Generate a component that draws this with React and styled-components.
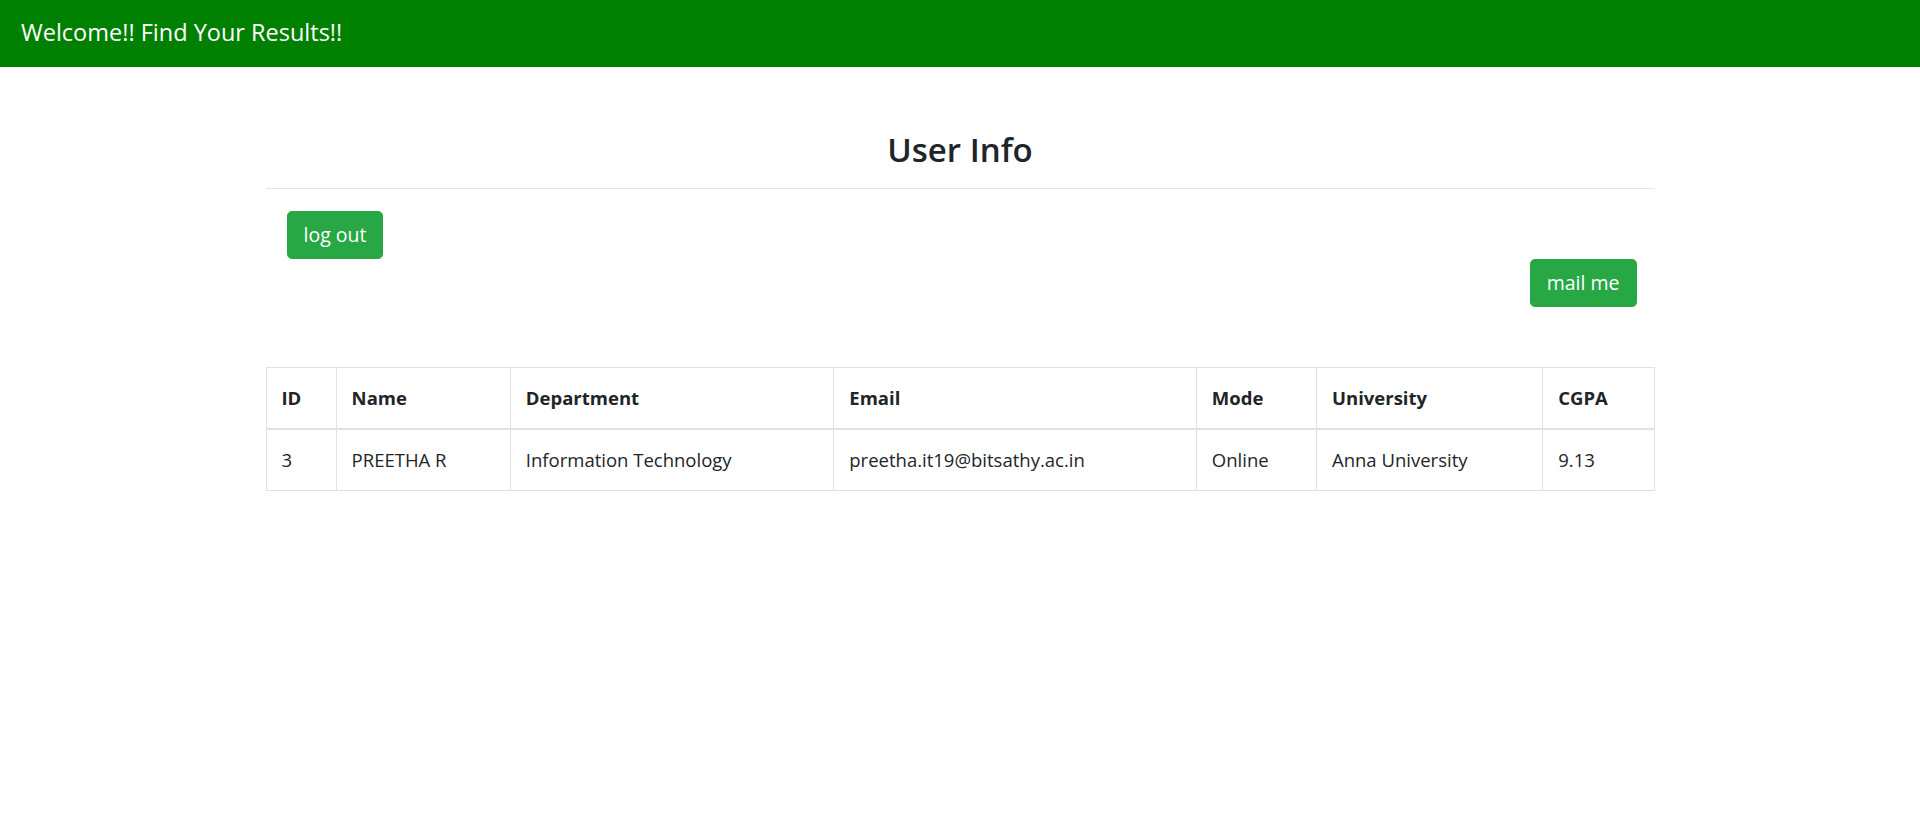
import React from "react";
import styled, { createGlobalStyle } from "styled-components";

const GlobalStyle = createGlobalStyle`
  body {
    margin: 0;
    font-family: "Open Sans", "Noto Sans", sans-serif;
    font-size: 16px;
    line-height: 1.5;
    color: #212529;
    background: #fff;
  }
  * {
    box-sizing: border-box;
  }
`;

const Navbar = styled.div`
  height: 67px;
  background-color: #008000;
  display: flex;
  align-items: center;
  padding: 0 21px;
`;

const Brand = styled.span`
  color: #fff;
  font-size: 23.5px;
  padding-bottom: 2px;
`;

const Container = styled.div`
  width: 1389px;
  margin: 0 auto;
`;

const Title = styled.h2`
  margin: 0;
  padding-top: 63px;
  text-align: center;
  font-size: 33px;
  font-weight: 600;
  line-height: 1.2;
`;

const Divider = styled.hr`
  margin: 18px 0 22px;
  border: 0;
  border-top: 1px solid rgba(0, 0, 0, 0.1);
`;

const Actions = styled.div`
  display: flex;
  flex-direction: column;
  align-items: ${(p) => (p.right ? "flex-end" : "flex-start")};
  padding: ${(p) => (p.right ? "0 18px 0 0" : "0 0 0 21px")};
`;

const Button = styled.button`
  height: 48px;
  padding: 0 16px;
  font-family: inherit;
  font-size: 19.5px;
  line-height: 1.5;
  color: #fff;
  background-color: #28a745;
  border: 1px solid #28a745;
  border-radius: 4.8px;
  cursor: pointer;
`;

const Table = styled.table`
  width: 100%;
  margin-top: 60px;
  border-collapse: collapse;
  table-layout: fixed;
  border: 1px solid #dee2e6;
  font-size: 18.5px;
  color: #212529;
`;

const Th = styled.th`
  width: ${(p) => p.w}px;
  padding: 16px 15px;
  text-align: left;
  font-weight: 700;
  line-height: 28px;
  border: 1px solid #dee2e6;
  border-bottom-width: 2px;
`;

const Td = styled.td`
  padding: 16px 15px;
  line-height: 28px;
  border: 1px solid #dee2e6;
`;

const columns = [
  { label: "ID", w: 70 },
  { label: "Name", w: 174 },
  { label: "Department", w: 323 },
  { label: "Email", w: 362 },
  { label: "Mode", w: 120 },
  { label: "University", w: 226 },
  { label: "CGPA", w: 111 },
];

const rows = [
  ["3", "PREETHA R", "Information Technology", "preetha.it19@bitsathy.ac.in", "Online", "Anna University", "9.13"],
];

const App = () => {
  return (
    <>
      <GlobalStyle />
      <Navbar>
        <Brand>Welcome!! Find Your Results!!</Brand>
      </Navbar>
      <Container>
        <Title>User Info</Title>
        <Divider />
        <Actions>
          <Button>log out</Button>
        </Actions>
        <Actions right>
          <Button>mail me</Button>
        </Actions>
        <Table>
          <thead>
            <tr>
              {columns.map((c) => (
                <Th key={c.label} w={c.w}>
                  {c.label}
                </Th>
              ))}
            </tr>
          </thead>
          <tbody>
            {rows.map((r) => (
              <tr key={r[0]}>
                {r.map((cell, i) => (
                  <Td key={i}>{cell}</Td>
                ))}
              </tr>
            ))}
          </tbody>
        </Table>
      </Container>
    </>
  );
};

export default App;
